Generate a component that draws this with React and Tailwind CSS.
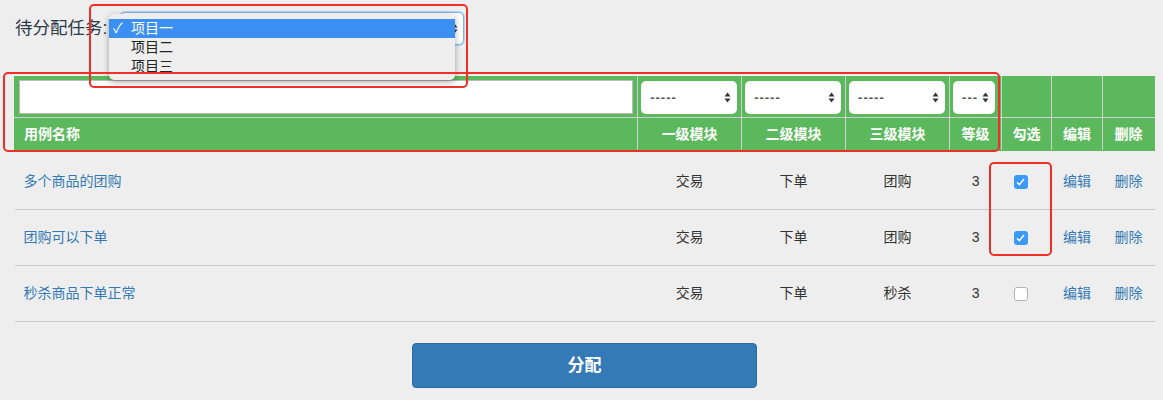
import React from "react";

const font = { fontFamily: '"Liberation Sans", "Noto Sans CJK SC", sans-serif' };

const rows = [
  { name: "多个商品的团购", m1: "交易", m2: "下单", m3: "团购", level: "3", checked: true },
  { name: "团购可以下单", m1: "交易", m2: "下单", m3: "团购", level: "3", checked: true },
  { name: "秒杀商品下单正常", m1: "交易", m2: "下单", m3: "秒杀", level: "3", checked: false },
];

function Arrows({ className = "" }) {
  return (
    <svg width="7" height="11" viewBox="0 0 7 11" className={className}>
      <path d="M3.5 0.5 L6.5 4.5 L0.5 4.5 Z" fill="#333" />
      <path d="M3.5 10.5 L6.5 6.5 L0.5 6.5 Z" fill="#333" />
    </svg>
  );
}

function FilterSelect({ text, width }) {
  return (
    <div
      className={`${width} h-[33px] bg-white rounded-[5px] flex items-center justify-between pl-[9px] pr-[6px]`}
    >
      <span className="text-[13px] text-[#555] tracking-[1px] leading-none">{text}</span>
      <Arrows />
    </div>
  );
}

function Checkbox({ checked }) {
  if (checked) {
    return (
      <div className="w-[14px] h-[14px] rounded-[3px] bg-[#3b99fc] flex items-center justify-center">
        <svg width="9" height="8" viewBox="0 0 9 8">
          <path d="M1 4.2 L3.4 6.6 L8 1" stroke="white" strokeWidth="1.4" fill="none" />
        </svg>
      </div>
    );
  }
  return <div className="w-[14px] h-[14px] rounded-[3px] bg-white border border-[#b5b5b5]" />;
}

export default function App() {
  return (
    <div className="relative w-[1163px] h-[400px] bg-[#eeeeee] overflow-hidden" style={font}>
      {/* task picker */}
      <div className="flex items-center pt-[12px] pl-[15px] h-[33px] box-content">
        <span className="text-[17.5px] text-[#2d3a4a] w-[105px] whitespace-nowrap">待分配任务:</span>
        <div className="w-[344px] h-[33px] rounded-[5px] border border-[#84b4ec] bg-white flex items-center justify-end pr-[5px] shadow-[0_0_0_1px_#b6d3f5]">
          <Arrows />
        </div>
      </div>

      {/* open dropdown menu */}
      <div className="absolute left-[109px] top-[14px] w-[346px] h-[66px] rounded-[5px] bg-[#eeeeee] shadow-[0_2px_6px_rgba(0,0,0,0.35)] pt-[5px] text-[14px]">
        <div className="h-[19px] bg-[#3b8ef2] text-white flex items-center">
          <span className="w-[22px] pl-[4px]">✓</span>
          <span>项目一</span>
        </div>
        <div className="h-[19px] flex items-center pl-[22px] text-[#222]">项目二</div>
        <div className="h-[19px] flex items-center pl-[22px] text-[#222]">项目三</div>
      </div>

      {/* cases table */}
      <div className="pl-[14px] pt-[31px] w-[1155px]">
        <table className="w-[1141px] border-collapse text-[14px]">
          <colgroup>
            <col className="w-[624px]" />
            <col className="w-[104px]" />
            <col className="w-[104px]" />
            <col className="w-[104px]" />
            <col className="w-[52px]" />
            <col className="w-[50px]" />
            <col className="w-[51px]" />
            <col className="w-[52px]" />
          </colgroup>
          <thead>
            <tr className="h-[41px] bg-[#5cb85c]">
              <th className="border border-[#cfcfcf] border-t-[#5cb85c] border-l-[#5cb85c] px-[4px]">
                <div className="h-[34px] bg-white border border-[#bbb]" />
              </th>
              <th className="border border-[#cfcfcf] border-t-[#5cb85c] px-[3px]">
                <FilterSelect text="-----" width="w-[96px]" />
              </th>
              <th className="border border-[#cfcfcf] border-t-[#5cb85c] px-[3px]">
                <FilterSelect text="-----" width="w-[96px]" />
              </th>
              <th className="border border-[#cfcfcf] border-t-[#5cb85c] px-[3px]">
                <FilterSelect text="-----" width="w-[96px]" />
              </th>
              <th className="border border-[#cfcfcf] border-t-[#5cb85c] px-[3px]">
                <FilterSelect text="---" width="w-[42px]" />
              </th>
              <th className="border border-[#cfcfcf] border-t-[#5cb85c]" />
              <th className="border border-[#cfcfcf] border-t-[#5cb85c]" />
              <th className="border border-[#cfcfcf] border-t-[#5cb85c] border-r-[#5cb85c]" />
            </tr>
            <tr className="h-[33px] bg-[#5cb85c] text-white font-bold">
              <th className="border border-[#cfcfcf] border-l-[#5cb85c] border-b-[#5cb85c] text-left pl-[9px]">用例名称</th>
              <th className="border border-[#cfcfcf] border-b-[#5cb85c]">一级模块</th>
              <th className="border border-[#cfcfcf] border-b-[#5cb85c]">二级模块</th>
              <th className="border border-[#cfcfcf] border-b-[#5cb85c]">三级模块</th>
              <th className="border border-[#cfcfcf] border-b-[#5cb85c]">等级</th>
              <th className="border border-[#cfcfcf] border-b-[#5cb85c]">勾选</th>
              <th className="border border-[#cfcfcf] border-b-[#5cb85c]">编辑</th>
              <th className="border border-[#cfcfcf] border-b-[#5cb85c] border-r-[#5cb85c]">删除</th>
            </tr>
          </thead>
          <tbody>
            {rows.map((r, i) => (
              <tr key={i} className={`border-b border-[#c8c8c8] ${i === 0 ? "h-[59px]" : "h-[56px]"}`}>
                <td className={`pl-[9px] text-[#337ab7] ${i === 0 ? "pt-[3px]" : ""}`}>{r.name}</td>
                <td className={`text-center text-[#333] ${i === 0 ? "pt-[3px]" : ""}`}>{r.m1}</td>
                <td className={`text-center text-[#333] ${i === 0 ? "pt-[3px]" : ""}`}>{r.m2}</td>
                <td className={`text-center text-[#333] ${i === 0 ? "pt-[3px]" : ""}`}>{r.m3}</td>
                <td className={`text-center text-[#333] ${i === 0 ? "pt-[3px]" : ""}`}>{r.level}</td>
                <td className={`pl-[12px] ${i === 0 ? "pt-[3px]" : ""}`}>
                  <Checkbox checked={r.checked} />
                </td>
                <td className={`text-center text-[#337ab7] ${i === 0 ? "pt-[3px]" : ""}`}>编辑</td>
                <td className={`text-center text-[#337ab7] ${i === 0 ? "pt-[3px]" : ""}`}>删除</td>
              </tr>
            ))}
          </tbody>
        </table>

        <div className="flex justify-center pt-[21px]">
          <button className="w-[345px] h-[45px] rounded-[4px] bg-[#337ab7] border border-[#2e6da4] text-white text-[17px] font-bold">
            分配
          </button>
        </div>
      </div>

      {/* red annotation boxes */}
      <div className="absolute left-[89px] top-[4px] w-[379px] h-[84px] border-2 border-[#ee3124] rounded-[5px] pointer-events-none" />
      <div className="absolute left-[3px] top-[72px] w-[997px] h-[80px] border-2 border-[#ee3124] rounded-[5px] pointer-events-none" />
      <div className="absolute left-[989px] top-[162px] w-[63px] h-[94px] border-2 border-[#ee3124] rounded-[5px] pointer-events-none" />
    </div>
  );
}
